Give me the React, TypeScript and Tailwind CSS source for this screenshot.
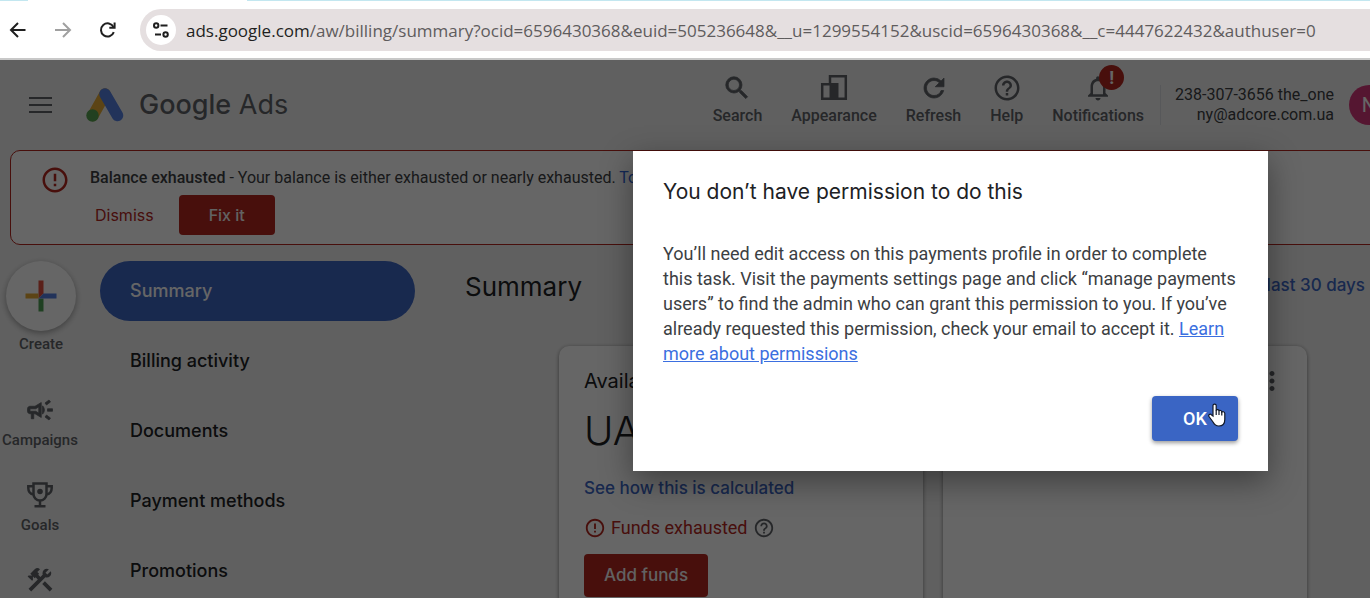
import type { ReactNode } from "react";
import {
  MdConstruction,
  MdErrorOutline,
  MdHelpOutline,
  MdMoreVert,
  MdNotificationsNone,
  MdOutlineCampaign,
  MdRefresh,
  MdSearch,
} from "react-icons/md";

const display = "font-[Inter,sans-serif]";
const boldIcon = "[&>path:not(:first-child)]:[stroke-width:0.6]";

const navItems = ["Summary", "Billing activity", "Documents", "Payment methods", "Promotions"];

const TuneIcon = () => (
  <svg width="18" height="18" viewBox="0 0 18 18" fill="none" stroke="#1f1f1f" strokeWidth="2">
    <circle cx="4.2" cy="4.5" r="2.2" />
    <path d="M8.5 4.5h7M3 13.5h6" />
    <circle cx="13.6" cy="13.5" r="2.2" />
  </svg>
);

const BrowserBar = () => (
  <div className="shrink-0 border-b-2 border-[#c8c8c8] bg-white font-['Open_Sans',sans-serif]">
    <div className="flex h-px justify-between bg-white">
      <div className="w-7 bg-[#c3e7f0]" />
      <div className="w-[82%] bg-[#c3e7f0]" />
    </div>
    <div className="flex h-[57px] items-center">
      <div className="flex items-center gap-[21px] pl-1.5">
        <button aria-label="Back" className="flex size-6 items-center justify-center">
          <svg width="24" height="24" viewBox="0 0 24 24" fill="none" stroke="#1f1f1f" strokeWidth="2">
            <path d="M19.5 12H5.5M12 5l-7 7 7 7" />
          </svg>
        </button>
        <button aria-label="Forward" className="flex size-6 items-center justify-center">
          <svg width="24" height="24" viewBox="0 0 24 24" fill="none" stroke="#a0a0a0" strokeWidth="2">
            <path d="M4 12h14.5M12 5l7 7-7 7" />
          </svg>
        </button>
        <button aria-label="Reload" className="flex size-6 items-center justify-center">
          <svg width="24" height="24" viewBox="0 0 24 24" fill="none" stroke="#1f1f1f" strokeWidth="2">
            <path d="M17.8 14.2A6.6 6.6 0 1 1 17.5 9" />
            <path d="M18.6 4.6V9.7H13.3" />
          </svg>
        </button>
      </div>
      <div className="ml-5 flex h-[42px] min-w-0 flex-1 items-center gap-2.5 rounded-l-full bg-[#e5dfe0] pl-1.5">
        <button aria-label="Site information" className="flex size-[30px] shrink-0 items-center justify-center rounded-full bg-white">
          <TuneIcon />
        </button>
        <p className="truncate pt-0.5 text-[17px] leading-6 text-[#5f5c5d]">
          <span className="text-[#1f1f1f]">ads.google.com</span>
          /aw/billing/summary?ocid=6596430368&amp;euid=505236648&amp;__u=1299554152&amp;uscid=6596430368&amp;__c=4447622432&amp;authuser=0
        </p>
      </div>
    </div>
  </div>
);

const AdsLogo = () => (
  <svg width="38" height="36" viewBox="0 0 38 36" fill="none" strokeLinecap="round">
    <path d="M19 7L7 28.5" stroke="#e5ab35" strokeWidth="11.5" />
    <path d="M19 7L31.5 28.5" stroke="#557fe0" strokeWidth="11.5" />
    <circle cx="6.5" cy="28.5" r="6.2" fill="#55a050" />
  </svg>
);

const AppearanceIcon = () => (
  <svg width="30" height="30" viewBox="0 0 30 30" fill="none" stroke="currentColor" strokeWidth="2.5">
    <path d="M11 10V3.2h15.8v22.6H3.2V11.2H11" />
    <path d="M10.5 10h9v16h-9z" fill="currentColor" stroke="none" />
  </svg>
);

const TrophyIcon = () => (
  <svg width="30" height="30" viewBox="0 0 30 30" fill="none" stroke="currentColor" strokeWidth="2.5">
    <path d="M8.5 3.5h13V14a6.5 6.5 0 0 1-13 0z" />
    <path d="M8.5 6.2H3.3V8c0 3.5 2 6 5.5 6.5M21.5 6.2h5.2V8c0 3.5-2 6-5.5 6.5M15 20v6M9.5 26.3h11" />
    <circle cx="15" cy="11.5" r="2.8" fill="currentColor" stroke="none" />
  </svg>
);

const ToolButton = ({ label, children }: { label: string; children: ReactNode }) => (
  <button className="flex flex-col items-center gap-[3px] text-base leading-5 font-medium">
    <span className="relative flex size-[30px] items-center justify-center">{children}</span>
    {label}
  </button>
);

const Header = () => (
  <header className="flex h-[90px] items-center text-[#5f6368]">
    <button aria-label="Main menu" className="ml-[29px] flex w-[23px] flex-col gap-[5px]">
      <span className="h-[2px] bg-current" />
      <span className="h-[2px] bg-current" />
      <span className="h-[2px] bg-current" />
    </button>
    <a href="#" className={`ml-[34px] flex items-center gap-[15px] text-[27px] ${display}`}>
      <AdsLogo />
      <span>
        <span className="font-medium">Google</span> Ads
      </span>
    </a>
    <div className="-mr-[19px] ml-auto flex items-center">
      <div className="flex gap-[29px] pb-[11px]">
        <ToolButton label="Search">
          <MdSearch size={30} className={boldIcon} />
        </ToolButton>
        <ToolButton label="Appearance">
          <AppearanceIcon />
        </ToolButton>
        <ToolButton label="Refresh">
          <MdRefresh size={30} className={boldIcon} />
        </ToolButton>
        <ToolButton label="Help">
          <MdHelpOutline size={30} />
        </ToolButton>
        <ToolButton label="Notifications">
          <MdNotificationsNone size={30} />
          <span className="absolute -top-2 left-4 flex size-[25px] items-center justify-center rounded-full bg-[#b3261e] text-lg font-bold text-white">
            !
          </span>
        </ToolButton>
      </div>
      <div className="ml-4 h-10 border-l border-[#dadce0]" />
      <p className="ml-3.5 text-right text-base leading-5 text-[#3c4043]">
        238-307-3656 the_one
        <br />
        ny@adcore.com.ua
      </p>
      <button className="ml-[15px] size-10 rounded-full bg-[#d5397b] text-xl text-white">N</button>
    </div>
  </header>
);

const Banner = () => (
  <section className="-mr-3 ml-2.5 flex h-[95px] items-start rounded-[10px] border border-[#b3261e] bg-white text-base text-[#3c4043]">
    <MdErrorOutline size={30} className="mt-3.5 ml-[29px] text-[#b3261e]" />
    <div className="ml-5 pt-[15px]">
      <p className="leading-6 whitespace-nowrap">
        <b className="font-medium">Balance exhausted</b> - Your balance is either exhausted or nearly exhausted.{" "}
        <a href="#" className="text-[#3367d6]">
          To
        </a>
      </p>
      <div className={`mt-[5px] flex items-center gap-[25px] pl-[5px] ${display}`}>
        <button className="text-[#b3261e]">Dismiss</button>
        <button className="h-10 rounded bg-[#b3261e] px-[30px] font-medium text-[#f5f5f5]">Fix it</button>
      </div>
    </div>
  </section>
);

const SideRail = () => (
  <aside className="flex w-20 shrink-0 flex-col items-center text-[15px] leading-5 font-medium text-[#5f6368]">
    <button className="ml-0.5 flex flex-col items-center gap-[3px]">
      <span className="flex size-[70px] items-center justify-center rounded-full bg-white shadow-[0_2px_6px_rgba(0,0,0,0.35)]">
        <svg width="32" height="32" viewBox="0 0 32 32">
          <path d="M13.5 0.5h5V13.5l-5 5z" fill="#e0503f" />
          <path d="M0.5 13.5h13v5h-13z" fill="#e5ab35" />
          <path d="M13.5 18.5h5v13h-5z" fill="#4fa055" />
          <path d="M18.5 13.5h13v5h-18z" fill="#557fe0" />
        </svg>
      </span>
      Create
    </button>
    <button className="mt-[41px] flex flex-col items-center gap-[5px]">
      <MdOutlineCampaign size={30} className={boldIcon} />
      Campaigns
    </button>
    <button className="mt-[30px] flex flex-col items-center gap-[5px]">
      <TrophyIcon />
      Goals
    </button>
    <button aria-label="Tools" className="mt-[30px]">
      <MdConstruction size={30} />
    </button>
  </aside>
);

const SubNav = () => (
  <nav className={`ml-5 flex w-[315px] shrink-0 flex-col gap-2.5 text-lg font-medium ${display}`}>
    {navItems.map((item, index) => (
      <a
        key={item}
        href="#"
        className={`flex h-[60px] items-center rounded-full pl-[30px] ${index === 0 ? "bg-[#3c66c4] text-white" : "text-[#202124]"}`}
      >
        {item}
      </a>
    ))}
  </nav>
);

const Main = () => (
  <main className={`ml-[50px] min-w-0 flex-1 ${display}`}>
    <div className="flex h-[50px] items-center justify-between pr-[5px]">
      <h1 className="text-[26px] text-[#202124]">Summary</h1>
      <a href="#" className="text-[17px] font-medium text-[#3c66c4]">
        last 30 days
      </a>
    </div>
    <div className="mt-[35px] mr-[63px] ml-[94px] grid grid-cols-2 gap-5">
      <section className="h-80 rounded-[10px] bg-white px-[25px] pt-5 shadow-[0_1px_4px_rgba(0,0,0,0.45)]">
        <h2 className="text-xl leading-[30px] text-[#202124]">Available funds</h2>
        <p className="mt-2 text-[40px] leading-[54px] font-light text-[#202124]">UAH 0.00</p>
        <a href="#" className="mt-4 block text-[17px] leading-7 font-medium text-[#3c66c4]">
          See how this is calculated
        </a>
        <p className="mt-3 flex items-center gap-[5px] font-[Roboto,sans-serif] text-lg leading-7 text-[#b3261e]">
          <MdErrorOutline size={22} />
          Funds exhausted
          <MdHelpOutline size={22} className="text-[#5f6368]" />
        </p>
        <button className="mt-3 h-[43px] rounded bg-[#b3261e] px-5 text-[17px] font-medium text-[#f5f5f5]">Add funds</button>
      </section>
      <section className="h-80 rounded-[10px] bg-white pt-5 shadow-[0_1px_4px_rgba(0,0,0,0.45)]">
        <button aria-label="More options" className="mr-5 ml-auto block text-[#5f6368]">
          <MdMoreVert size={30} />
        </button>
      </section>
    </div>
  </main>
);

const HandCursor = () => (
  <svg width="18" height="24" viewBox="0 0 18 24" className="absolute top-[7px] right-3">
    <path
      d="M5 13V2.6C5 .5 8.2 .5 8.2 2.6V7.5C8.5 6.2 11 6.5 11 8 11.5 7 13.7 7.4 13.8 9 14.5 8.2 16.8 8.6 16.8 10.5V16.5C16.8 20.5 14.5 23 10.8 23 7.5 23 6.3 21.5 5 19L1 13.5C0 11.8 2.2 10.3 3.4 11.7z"
      fill="#fff"
      stroke="#111827"
      strokeWidth="1.2"
    />
    <path d="M8.2 7v5M11 8v4M13.8 9v3.5" stroke="#111827" strokeWidth="1.2" />
  </svg>
);

const PermissionDialog = () => (
  <div className="absolute inset-0 flex items-start justify-end bg-black/60 pt-[91px] pr-[102px]">
    <div
      role="dialog"
      aria-labelledby="dialog-title"
      className="flex w-[635px] flex-col bg-white px-[30px] pt-[23px] pb-[30px] shadow-[0_10px_30px_rgba(0,0,0,0.4)]"
    >
      <h2 id="dialog-title" className={`text-[21px] leading-9 text-[#202124] ${display}`}>
        You don’t have permission to do this
      </h2>
      <p className="mt-[31px] text-lg leading-[25px] text-[#3c4043]">
        You’ll need edit access on this payments profile in order to complete this task. Visit the payments settings page and
        click “manage payments users” to find the admin who can grant this permission to you. If you’ve already requested this
        permission, check your email to accept it.{" "}
        <a href="#" className="text-[#3b6fe0] underline">
          Learn more about permissions
        </a>
      </p>
      <button className="relative mt-[30px] h-[45px] w-[86px] self-end rounded bg-[#3a65c4] text-lg font-medium text-white shadow-[0_2px_4px_rgba(0,0,0,0.4)]">
        OK
        <HandCursor />
      </button>
    </div>
  </div>
);

const App = () => (
  <div className="flex h-screen flex-col overflow-hidden font-[Roboto,sans-serif]">
    <BrowserBar />
    <div className="relative min-h-0 flex-1 overflow-hidden bg-[#f1f1f1]">
      <Header />
      <Banner />
      <div className="mt-4 flex">
        <SideRail />
        <SubNav />
        <Main />
      </div>
      <PermissionDialog />
    </div>
  </div>
);

export default App;
